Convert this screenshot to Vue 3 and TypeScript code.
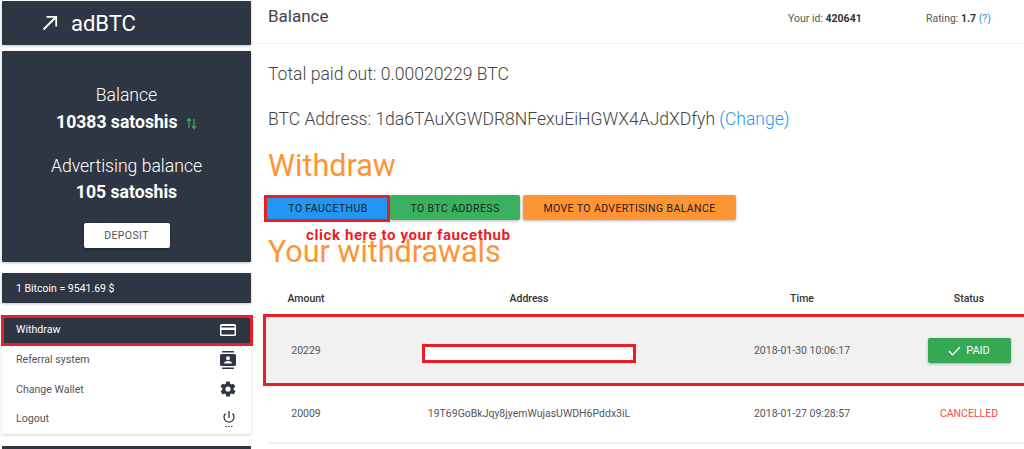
<script setup lang="ts">
const menu = [
  { label: 'Withdraw', icon: 'card', active: true },
  { label: 'Referral system', icon: 'contacts', active: false },
  { label: 'Change Wallet', icon: 'gear', active: false },
  { label: 'Logout', icon: 'power', active: false },
]
</script>

<template>
  <div class="page">
    <aside class="side">
      <div class="logo card">
        <svg class="logo-arrow" width="18" height="18" viewBox="0 0 18 18"><path d="M2.5 15.500 15 3M5.500 2.800H15.200V12.500" fill="none" stroke="#fff" stroke-width="1.800"/></svg>
        <span>adBTC</span>
      </div>
      <div class="balance card">
        <div class="bal-label">Balance</div>
        <div class="bal-value first">10383 satoshis
          <svg class="swap" width="11" height="13" viewBox="0 0 11 13"><path d="M3 11V2M1 4l2-2.500 2 2.500M8 2v9M6 9l2 2.500 2-2.500" fill="none" stroke="#34a853" stroke-width="1.300"/></svg>
        </div>
        <div class="bal-label second">Advertising balance</div>
        <div class="bal-value last">105 satoshis</div>
        <button class="deposit">DEPOSIT</button>
      </div>
      <div class="price card">1 Bitcoin = 9541.69 $</div>
      <nav class="menu">
        <div v-for="m in menu" :key="m.label" class="item" :class="{ active: m.active }">
          <span>{{ m.label }}</span>
          <svg v-if="m.icon === 'card'" width="16" height="14" viewBox="0 0 16 14"><path fill="#fff" d="M1.500 1h13A1.500 1.500 0 0 1 16 2.500v9a1.500 1.500 0 0 1-1.500 1.500h-13A1.500 1.500 0 0 1 0 11.500v-9A1.500 1.500 0 0 1 1.500 1zM1.500 3v1.500h13V3zm0 4v4.500h13V7z"/></svg>
          <svg v-else-if="m.icon === 'contacts'" width="16" height="18" viewBox="0 0 16 18"><path fill="#2f3643" d="M2 0h12v1.500H2zM2 16.500h12V18H2zM1.500 3h13A1.500 1.500 0 0 1 16 4.500v9a1.500 1.500 0 0 1-1.500 1.500h-13A1.500 1.500 0 0 1 0 13.500v-9A1.500 1.500 0 0 1 1.500 3z"/><circle cx="8" cy="7.300" r="2" fill="#fff"/><path fill="#fff" d="M4 12.500c0-1.700 2.500-2.400 4-2.400s4 .7 4 2.400z"/></svg>
          <svg v-else-if="m.icon === 'gear'" class="gear" width="18" height="18" viewBox="0 0 24 24"><path fill="#2f3643" d="M19.400 13c.1-.3.100-.7.100-1s0-.7-.1-1l2.100-1.600c.2-.2.200-.4.100-.6l-2-3.500c-.1-.2-.4-.3-.6-.2l-2.500 1c-.5-.4-1.100-.7-1.700-1l-.4-2.600c0-.3-.2-.5-.5-.5h-4c-.3 0-.5.2-.5.400l-.4 2.700c-.6.200-1.200.6-1.700 1l-2.500-1c-.2-.1-.5 0-.6.200l-2 3.500c-.1.200-.1.400.1.600L4.600 11c0 .3-.1.700-.1 1s0 .7.1 1l-2.100 1.600c-.2.200-.2.400-.1.600l2 3.500c.1.200.4.300.6.200l2.500-1c.5.400 1.100.7 1.700 1l.4 2.600c0 .3.200.5.500.5h4c.3 0 .5-.2.500-.4l.4-2.700c.6-.2 1.200-.6 1.700-1l2.500 1c.2.100.5 0 .6-.2l2-3.500c.1-.2.100-.4-.1-.6zM12 15.500a3.500 3.500 0 1 1 0-7 3.500 3.500 0 0 1 0 7z"/></svg>
          <svg v-else width="14" height="18" viewBox="0 0 14 18"><path d="M7 1v7M3.500 3.500a5 5 0 1 0 7 0" fill="none" stroke="#2f3643" stroke-width="1.300"/><path d="M3.500 16.500h1.500M6.200 16.500h1.500M9 16.500h1.500" stroke="#2f3643" stroke-width="1.200"/></svg>
        </div>
      </nav>
      <div class="bottom"></div>
    </aside>

    <main class="main">
      <header class="head">
        <div class="title">Balance</div>
        <div class="id">Your id: <b>420641</b></div>
        <div class="rating">Rating: <b>1.7</b> <a>(?)</a></div>
      </header>
      <section class="body">
        <p class="paid">Total paid out: 0.00020229 BTC</p>
        <p class="addr">BTC Address: 1da6TAuXGWDR8NFexuEiHGWX4AJdXDfyh <a>(Change)</a></p>
        <h1 class="withdraw">Withdraw</h1>
        <div class="btns">
          <button class="btn blue">TO FAUCETHUB</button>
          <button class="btn green">TO BTC ADDRESS</button>
          <button class="btn orange">MOVE TO ADVERTISING BALANCE</button>
        </div>
        <h1 class="yours">Your withdrawals</h1>
        <div class="row th">
          <div>Amount</div><div>Address</div><div>Time</div><div>Status</div>
        </div>
        <div class="row r1">
          <div>20229</div><div></div><div>2018-01-30 10:06:17</div>
          <div><button class="paid-btn"><svg width="13" height="10" viewBox="0 0 13 10"><path d="M1 5l3.500 3.800L12 1" fill="none" stroke="#fff" stroke-width="1.200"/></svg>PAID</button></div>
        </div>
        <div class="row r2">
          <div>20009</div><div>19T69GoBkJqy8jyemWujasUWDH6Pddx3iL</div><div>2018-01-27 09:28:57</div>
          <div class="cancelled">CANCELLED</div>
        </div>
      </section>
    </main>

    <div class="mark m-menu"></div>
    <div class="mark m-btn"></div>
    <div class="mark m-row"></div>
    <div class="mark m-addr"></div>
    <div class="note">click here to your faucethub</div>
  </div>
</template>

<style>
html, body { margin: 0; overflow: hidden; background: #fff; }
</style>

<style scoped>
.page { position: relative; width: 1024px; height: 449px; overflow: hidden; display: flex; font-family: Roboto, sans-serif; background: #fff; color: #444; }
.side { width: 256px; flex: none; padding: 1px 5px 0 2px; box-sizing: border-box; display: flex; flex-direction: column; }
.card { background: #2f3643; color: #fff; box-shadow: 0 1px 3px rgba(0,0,0,.25); border-radius: 1px; }
.logo { height: 44px; display: flex; align-items: center; font-size: 22px; font-weight: 400; padding-left: 39px; box-sizing: border-box; flex: none; }
.logo-arrow { margin-right: 12px; }
.balance { margin-top: 6px; height: 211px; flex: none; display: flex; flex-direction: column; align-items: center; padding-top: 33px; box-sizing: border-box; }
.bal-label { font-size: 17.600px; font-weight: 300; line-height: 22px; }
.bal-label.second { margin-top: 22px; }
.bal-value { font-size: 17.600px; font-weight: 700; line-height: 22px; }
.bal-value.first { margin-top: 5px; }
.bal-value.last { margin-top: 4px; }
.swap { margin-left: 4px; vertical-align: -2px; }
.deposit { margin-top: 20px; width: 86px; height: 25px; background: #fff; color: #555; border: 0; border-radius: 2px; font: 400 10.500px Roboto, sans-serif; letter-spacing: .4px; box-shadow: 0 1px 3px rgba(0,0,0,.3); }
.price { margin-top: 11px; height: 30px; flex: none; display: flex; align-items: center; padding-left: 14px; font-size: 10.500px; box-sizing: border-box; }
.menu { margin-top: 12px; height: 119px; flex: none; background: #fff; box-shadow: 0 1px 3px rgba(0,0,0,.18); border-radius: 2px; }
.item { height: 29.700px; display: flex; align-items: center; justify-content: space-between; padding: 0 15px 0 14px; font-size: 10.600px; color: #555; }
.item svg { display: block; }
.item .gear { margin-right: -1px; }
.item.active { background: #2f3643; color: #fff; }
.bottom { margin-top: 12px; height: 10px; flex: none; background: #2f3643; }
.main { flex: 1; min-width: 0; display: flex; flex-direction: column; }
.head { height: 43px; flex: none; border-bottom: 1px solid #eee; display: flex; align-items: flex-start; padding-left: 12px; }
.title { font-size: 17px; color: #444; width: 520px; line-height: 33px; }
.id, .rating { font-size: 10.500px; line-height: 37px; color: #555; }
.id { width: 138px; }
.id b, .rating b { color: #333; font-weight: 700; }
a { color: #2196f3; }
.body { padding-left: 12px; }
.paid, .addr { margin: 0; font-size: 17.550px; font-weight: 300; color: #444; line-height: 24px; }
.paid { margin-top: 18px; }
.addr { margin-top: 21px; }
.withdraw, .yours { margin: 0; color: #ff9435; font-weight: 400; font-size: 30.500px; line-height: 38px; }
.withdraw { margin-top: 16px; }
.btns { margin-top: 10px; display: flex; margin-left: -2px; }
.btn { height: 25px; border: 0; border-radius: 2px; font: 400 10.500px Roboto, sans-serif; letter-spacing: .4px; color: #222; box-shadow: 0 1px 3px rgba(0,0,0,.3); padding: 1px 0 0; }
.blue { width: 124px; background: #2196f3; }
.green { width: 130px; background: #3ab15f; }
.orange { width: 213px; margin-left: 3px; background: #ff9435; }
.yours { margin-top: 13px; }
.row { display: grid; grid-template-columns: 76px 370px 176px 158px; text-align: center; font-size: 10.500px; align-items: center; color: #555; }
.th { height: 45px; box-sizing: border-box; padding-top: 9px; font-weight: 500; color: #333; }
.r1 { height: 69px; background: #f1f1f1; margin-left: -4px; padding-left: 4px; }
.r2 { height: 57px; border-bottom: 2px solid #eee; }
.paid-btn { width: 83px; height: 25px; background: #34a853; color: #fff; border: 0; border-radius: 2px; font: 400 11px Roboto, sans-serif; box-shadow: 0 1px 3px rgba(0,0,0,.3); display: inline-flex; align-items: center; justify-content: center; gap: 5px; }
.cancelled { color: #f44a4a; }
.mark { position: absolute; border: 3px solid #ee1c25; box-sizing: border-box; }
.m-menu { left: 1px; top: 315px; width: 252px; height: 31px; }
.m-btn { left: 264px; top: 195px; width: 126px; height: 27px; }
.m-row { left: 263px; top: 314px; width: 780px; height: 72px; }
.m-addr { left: 422px; top: 344px; width: 214px; height: 19px; background: #fff; }
.note { position: absolute; left: 306px; top: 226px; font: 700 15px Roboto, sans-serif; color: #ee1c25; white-space: nowrap; letter-spacing: .6px; }
</style>
